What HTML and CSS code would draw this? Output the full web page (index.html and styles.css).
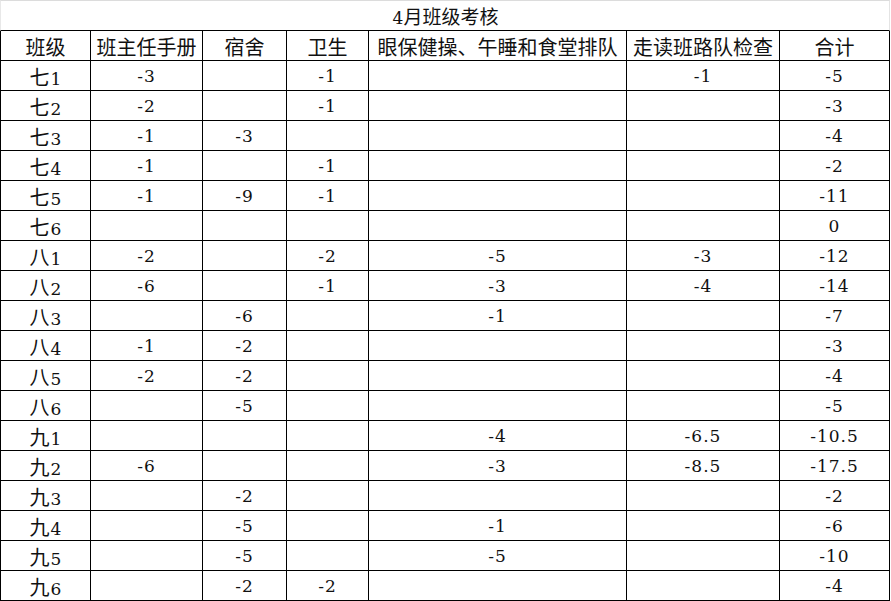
FILE: index.html
```html
<!DOCTYPE html>
<html>
<head>
<meta charset="utf-8">
<title>4月班级考核</title>
<link rel="stylesheet" href="styles.css">
</head>
<body>
<div class="sheet">
  <div class="title"><span class="d">4</span>月班级考核</div>
  <div class="grid">
    <div class="c">班级</div><div class="c">班主任手册</div><div class="c">宿舍</div><div class="c">卫生</div><div class="c">眼保健操、午睡和食堂排队</div><div class="c">走读班路队检查</div><div class="c">合计</div>

    <div class="c">七<span class="d">1</span></div><div class="c n">-3</div><div class="c"></div><div class="c n">-1</div><div class="c"></div><div class="c n">-1</div><div class="c n">-5</div>
    <div class="c">七<span class="d">2</span></div><div class="c n">-2</div><div class="c"></div><div class="c n">-1</div><div class="c"></div><div class="c"></div><div class="c n">-3</div>
    <div class="c">七<span class="d">3</span></div><div class="c n">-1</div><div class="c n">-3</div><div class="c"></div><div class="c"></div><div class="c"></div><div class="c n">-4</div>
    <div class="c">七<span class="d">4</span></div><div class="c n">-1</div><div class="c"></div><div class="c n">-1</div><div class="c"></div><div class="c"></div><div class="c n">-2</div>
    <div class="c">七<span class="d">5</span></div><div class="c n">-1</div><div class="c n">-9</div><div class="c n">-1</div><div class="c"></div><div class="c"></div><div class="c n">-11</div>
    <div class="c">七<span class="d">6</span></div><div class="c"></div><div class="c"></div><div class="c"></div><div class="c"></div><div class="c"></div><div class="c n">0</div>
    <div class="c">八<span class="d">1</span></div><div class="c n">-2</div><div class="c"></div><div class="c n">-2</div><div class="c n">-5</div><div class="c n">-3</div><div class="c n">-12</div>
    <div class="c">八<span class="d">2</span></div><div class="c n">-6</div><div class="c"></div><div class="c n">-1</div><div class="c n">-3</div><div class="c n">-4</div><div class="c n">-14</div>
    <div class="c">八<span class="d">3</span></div><div class="c"></div><div class="c n">-6</div><div class="c"></div><div class="c n">-1</div><div class="c"></div><div class="c n">-7</div>
    <div class="c">八<span class="d">4</span></div><div class="c n">-1</div><div class="c n">-2</div><div class="c"></div><div class="c"></div><div class="c"></div><div class="c n">-3</div>
    <div class="c">八<span class="d">5</span></div><div class="c n">-2</div><div class="c n">-2</div><div class="c"></div><div class="c"></div><div class="c"></div><div class="c n">-4</div>
    <div class="c">八<span class="d">6</span></div><div class="c"></div><div class="c n">-5</div><div class="c"></div><div class="c"></div><div class="c"></div><div class="c n">-5</div>
    <div class="c">九<span class="d">1</span></div><div class="c"></div><div class="c"></div><div class="c"></div><div class="c n">-4</div><div class="c n">-6.5</div><div class="c n">-10.5</div>
    <div class="c">九<span class="d">2</span></div><div class="c n">-6</div><div class="c"></div><div class="c"></div><div class="c n">-3</div><div class="c n">-8.5</div><div class="c n">-17.5</div>
    <div class="c">九<span class="d">3</span></div><div class="c"></div><div class="c n">-2</div><div class="c"></div><div class="c"></div><div class="c"></div><div class="c n">-2</div>
    <div class="c">九<span class="d">4</span></div><div class="c"></div><div class="c n">-5</div><div class="c"></div><div class="c n">-1</div><div class="c"></div><div class="c n">-6</div>
    <div class="c">九<span class="d">5</span></div><div class="c"></div><div class="c n">-5</div><div class="c"></div><div class="c n">-5</div><div class="c"></div><div class="c n">-10</div>
    <div class="c">九<span class="d">6</span></div><div class="c"></div><div class="c n">-2</div><div class="c n">-2</div><div class="c"></div><div class="c"></div><div class="c n">-4</div>
  </div>
</div>
</body>
</html>
```

FILE: styles.css
```css
html, body {
  margin: 0;
  padding: 0;
  background: #ffffff;
}

body {
  font-family: "Noto Sans CJK SC", sans-serif;
  font-size: 20px;
  color: #111111;
}

.sheet {
  width: 890px;
}

.title {
  height: 29px;
  border-top: 1px solid #dcdcdc;
  border-right: 1px solid #e4e4e4;
  border-left: 1px solid #e8e8e8;
  border-bottom: 1px solid #000000;
  box-sizing: content-box;
  width: 888px;
  text-align: center;
  line-height: 29px;
  font-size: 19px;
  white-space: nowrap;
}

.grid {
  display: grid;
  grid-template-columns: 90px 112px 84px 82px 258px 153px 110px;
  grid-auto-rows: 30px;
  border-left: 1px solid #000000;
  width: 889px;
}

.c {
  box-sizing: border-box;
  border-right: 1px solid #000000;
  border-bottom: 1px solid #000000;
  text-align: center;
  white-space: nowrap;
  line-height: 29px;
  padding-top: 1px;
  overflow: hidden;
}

.n {
  font-family: "DejaVu Serif", serif;
  font-size: 17px;
  letter-spacing: 1px;
}

.d {
  font-family: "DejaVu Serif", serif;
  font-size: 17px;
  margin-left: 1px;
}
```
